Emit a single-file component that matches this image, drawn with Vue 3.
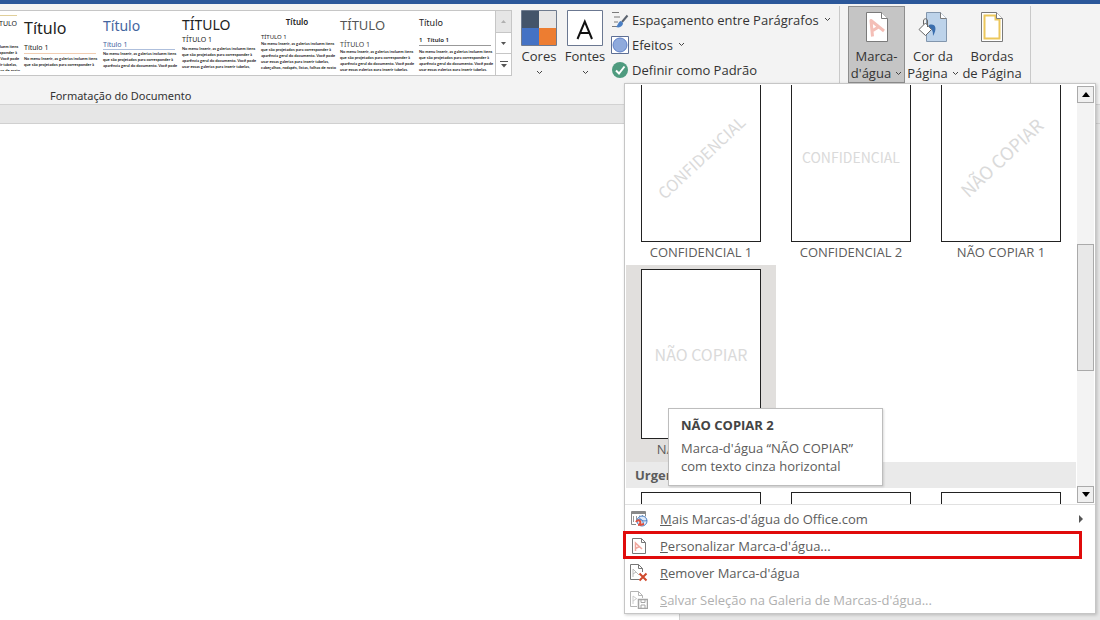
<script setup>
const body = [
  'No menu Inserir, as galerias incluem itens',
  'que são projetados para corresponder à',
  'aparência geral do documento. Você pode',
  'usar essas galerias para inserir tabelas,',
  'cabeçalhos, rodapés, listas, folhas de rosto',
  'e outros blocos de construção do'
]
const styles = [
  { id: 0, title: 'TÍTULO', sub: '', kind: 's-cut', lines: 5 },
  { id: 1, title: 'Título', sub: 'Título 1', kind: 's-office', lines: 2 },
  { id: 2, title: 'Título', sub: 'Título 1', kind: 's-blue', lines: 3 },
  { id: 3, title: 'TÍTULO', sub: 'TÍTULO 1', kind: 's-caps', lines: 4 },
  { id: 4, title: 'Título', sub: 'TÍTULO 1', kind: 's-center', lines: 5 },
  { id: 5, title: 'TÍTULO', sub: 'TÍTULO 1', kind: 's-light', lines: 4 },
  { id: 6, title: 'Título', sub: '1   Título 1', kind: 's-number', lines: 4 }
]
const marks = [
  { name: 'CONFIDENCIAL 1', text: 'CONFIDENCIAL', cls: 'conf diag' },
  { name: 'CONFIDENCIAL 2', text: 'CONFIDENCIAL', cls: 'conf' },
  { name: 'NÃO COPIAR 1', text: 'NÃO COPIAR', cls: 'copy diag' },
  { name: 'NÃO COPIAR 2', text: 'NÃO COPIAR', cls: 'copy', active: true }
]
const actions = [
  { icon: 'office', key: 'M', rest: "ais Marcas-d'água do Office.com", arrow: true },
  { icon: 'custom', key: 'P', rest: "ersonalizar Marca-d'água...", marked: true },
  { icon: 'remove', key: 'R', rest: "emover Marca-d'água" },
  { icon: 'save', key: 'S', rest: "alvar Seleção na Galeria de Marcas-d'água...", disabled: true }
]
</script>

<template>
  <div class="app">
    <div class="titlebar"></div>
    <header class="ribbon">
      <div class="tools">
        <div class="gallery">
          <div class="strip">
            <button v-for="s in styles" :key="s.id" class="style" :class="s.kind">
              <span class="s-title">{{ s.title }}</span>
              <span v-if="s.sub" class="s-sub">{{ s.sub }}</span>
              <span class="s-body"><span v-for="l in body.slice(0, s.lines)" :key="l">{{ l }}</span></span>
            </button>
          </div>
          <div class="spin">
            <button class="off" aria-label="Anterior"><svg width="5" height="3"><path d="M0 3L2.500 0 5 3z" fill="#b0b0b0" /></svg></button>
            <button aria-label="Próximo"><svg width="5" height="3"><path d="M0 0h5L2.500 3z" fill="#555" /></svg></button>
            <button aria-label="Mais estilos"><svg width="8" height="7"><path d="M0 .5h8" stroke="#555" /><path d="M1 3h6L4 6.500z" fill="#555" /></svg></button>
          </div>
        </div>

        <button class="big cores">
          <svg width="36" height="36" viewBox="0 0 36 36">
            <path fill="#44546a" d="M1 1h17v17H1z" /><path fill="#e7e6e6" d="M18 1h17v17H18z" />
            <path fill="#4472c4" d="M1 18h17v17H1z" /><path fill="#ed7d31" d="M18 18h17v17H18z" />
            <path d="M.5 .5h35v35H.5z" fill="none" stroke="#6f7b8f" />
          </svg>
          <span>Cores</span>
          <svg class="chev" width="7" height="5"><path d="M1 1l2.500 2.500L6 1" /></svg>
        </button>
        <button class="big fontes">
          <svg width="36" height="36" viewBox="0 0 36 36">
            <path d="M.5 .5h35v35H.5z" fill="#fff" stroke="#6b7891" />
            <path d="M10.500 29L17.800 11.500 25 29M13.300 23h9" fill="none" stroke="#111" stroke-width="2" />
          </svg>
          <span>Fontes</span>
          <svg class="chev" width="7" height="5"><path d="M1 1l2.500 2.500L6 1" /></svg>
        </button>

        <div class="stack">
          <button>
            <svg width="18" height="18" viewBox="0 0 18 18" fill="none">
              <path d="M1 1.500h7M3 6h6M3 11h4M1 15.500h5" stroke="#7a7a7a" />
              <path d="M16.500 4.500L11 11" stroke="#5c6470" stroke-width="2" />
              <path d="M10 10c-3 .5-3 4.500-5 6 4 1.500 7-1 7-4z" fill="#4a7fc4" />
            </svg>
            <span>Espaçamento entre Parágrafos</span>
            <svg class="chev" width="7" height="5"><path d="M1 1l2.500 2.500L6 1" /></svg>
          </button>
          <button>
            <svg width="18" height="18" viewBox="0 0 18 18"><path d="M.5 .5h17v17H.5z" fill="#fff" stroke="#5d6f95" /><circle cx="9" cy="9" r="7" fill="#8faadc" stroke="#5f80c8" /></svg>
            <span>Efeitos</span>
            <svg class="chev" width="7" height="5"><path d="M1 1l2.500 2.500L6 1" /></svg>
          </button>
          <button>
            <svg width="18" height="18" viewBox="0 0 18 18"><circle cx="9" cy="9" r="8" fill="#4f9b7f" /><path d="M5 9.500l3 3 5.500-7" fill="none" stroke="#fff" stroke-width="2" /></svg>
            <span>Definir como Padrão</span>
          </button>
        </div>

        <div class="page-group">
          <div class="anchor">
            <button class="big page pressed" aria-expanded="true">
              <svg width="30" height="32" viewBox="0 0 30 32">
                <path d="M4.500 1.500h15l6 6v23h-21z" fill="#fff" stroke="#7a7a7a" /><path d="M19.500 1.500v6h6" fill="#fff" stroke="#7a7a7a" />
                <path d="M10.500 25.500L9 9.500 22 20M10 20l6.500-4" fill="none" stroke="#f4bfb7" stroke-width="3" stroke-linejoin="round" />
              </svg>
              <span>Marca-</span>
              <span>d'água <svg class="chev" width="7" height="5"><path d="M1 1l2.500 2.500L6 1" /></svg></span>
            </button>

            <section class="menu">
              <div class="scroller">
                <div class="view">
                  <div class="cells">
                    <button v-for="m in marks" :key="m.name" class="cell" :class="{ active: m.active }">
                      <span class="sheet"><span class="wm" :class="m.cls">{{ m.text }}</span></span>
                      <span class="caption">{{ m.name }}</span>
                    </button>
                  </div>
                  <h2>Urgente</h2>
                  <div class="cells">
                    <button v-for="n in 3" :key="n" class="cell" :aria-label="'Urgente ' + n"><span class="sheet"></span></button>
                  </div>
                </div>
                <div class="bar">
                  <button aria-label="Rolar para cima"><svg width="8" height="5"><path d="M0 5L4 0l4 5z" /></svg></button>
                  <div class="track"><div class="thumb"></div></div>
                  <button aria-label="Rolar para baixo"><svg width="8" height="5"><path d="M0 0h8L4 5z" /></svg></button>
                </div>
                <div class="tip" role="tooltip">
                  <strong>NÃO COPIAR 2</strong>
                  <p>Marca-d'água “NÃO COPIAR”<br />com texto cinza horizontal</p>
                </div>
              </div>
              <div class="actions">
                <button v-for="a in actions" :key="a.icon" :class="{ marked: a.marked }" :disabled="a.disabled">
                  <svg v-if="a.icon === 'office'" width="18" height="18" viewBox="0 0 18 18" fill="none">
                    <path d="M6 14.500H1.500v-13h14v5" stroke="#888" /><path d="M1 3h15" stroke="#888" stroke-width="2" /><path d="M3.500 6v6M6.500 6v5M9.500 5.500v2M12.500 5v1.500" stroke="#999" />
                    <circle cx="12" cy="11" r="5" stroke="#4a82c8" fill="#dfeafa" /><path d="M7.500 10c3-2 6 0 6 5M9 7.500c2 3 5 4 8 3" stroke="#4a82c8" /><path d="M6 12c1-2 3-2 4-1s0 4-2 4M10 15l4-1" stroke="#e0503c" stroke-width="2" />
                  </svg>
                  <svg v-else-if="a.icon === 'custom'" width="18" height="18" viewBox="0 0 18 18" fill="none">
                    <path d="M2.500 1.500h9l4 4v11h-13z" fill="#fff" stroke="#777" /><path d="M11.500 1.500v4h4" stroke="#777" /><path d="M5.500 14V6l6.500 6M5.500 11.500l4-2" stroke="#f0a79d" stroke-width="1.500" />
                  </svg>
                  <svg v-else-if="a.icon === 'remove'" width="18" height="18" viewBox="0 0 18 18" fill="none">
                    <path d="M9 15.500H.5V.5h8l4 4V8M8.500 .5v4h4" stroke="#777" /><path d="M3 13V5l6 6M3 10l3-2" stroke="#bbb" /><path d="M9.500 9.500l7 7M16.500 9.500l-7 7" stroke="#d0492c" stroke-width="2" />
                  </svg>
                  <svg v-else width="18" height="18" viewBox="0 0 18 18" fill="none">
                    <path d="M7 15.500H.5V.5h8l4 4V7M8.500 .5v4h4" stroke="#b5b5b5" /><path d="M3 13V5l4 3M3 10l3-2" stroke="#ccc" />
                    <path d="M8.500 8.500h9v9h-9z" stroke="#a5a5a5" stroke-width="1.500" /><path d="M11 8.500v3h4v-3M11 17v-3h4v3" stroke="#a5a5a5" />
                  </svg>
                  <span class="label"><u>{{ a.key }}</u>{{ a.rest }}</span>
                  <svg v-if="a.arrow" width="4" height="8"><path d="M0 0l4 4-4 4z" fill="#555" /></svg>
                </button>
              </div>
            </section>
          </div>
          <button class="big page">
            <svg width="30" height="32" viewBox="0 0 30 32">
              <path d="M8.500 1.500h14l6 6v23h-20z" fill="#bdd3ea" stroke="#8296ad" /><path d="M22.500 1.500v6h6" fill="#fff" stroke="#7a7a7a" />
              <path d="M11 14c6-2 9 3 4 11 0-4 0-6-4-9z" fill="#3a6eae" />
              <path d="M1 18.500l6.500-6.500 6 6.500-6 6z" fill="#fff" stroke="#666" /><path d="M5.500 13.500V10c0-3 4-3 4 0v6" fill="none" stroke="#666" />
            </svg>
            <span>Cor da</span>
            <span>Página <svg class="chev" width="7" height="5"><path d="M1 1l2.500 2.500L6 1" /></svg></span>
          </button>
          <button class="big page">
            <svg width="30" height="32" viewBox="0 0 30 32">
              <path d="M4.500 1.500h15l6 6v23h-21z" fill="#fff" stroke="#7a7a7a" /><path d="M7.500 4.500h11v4h4v19h-15z" fill="none" stroke="#ecc75c" stroke-width="2" /><path d="M19.500 1.500v6h6" fill="#fff" stroke="#7a7a7a" />
            </svg>
            <span>Bordas</span>
            <span>de Página</span>
          </button>
        </div>
      </div>
      <div class="group-label">Formatação do Documento</div>
    </header>
    <div class="gap"></div>
    <main class="desk"><div class="paper"></div></main>
  </div>
</template>

<style>
html, body, #app { height: 100%; }
body { margin: 0; overflow: hidden; }
</style>

<style scoped>
* { box-sizing: border-box; }
.app { height: 100%; display: flex; flex-direction: column; font: 13px/18px "Open Sans", "Noto Sans", sans-serif; color: #333; background: #e6e6e6; }
button { font: inherit; color: inherit; background: none; border: 0; padding: 0; margin: 0; }
svg { display: block; flex: none; }
.titlebar { height: 4px; background: #2b579a; flex: none; }
.ribbon { background: #f3f3f3; border-bottom: 1px solid #d2d2d2; flex: none; }
.tools { display: flex; align-items: flex-start; height: 79px; }
.gallery { display: flex; width: 512px; height: 66px; margin-top: 6px; background: #fff; border: 1px solid #c6c6c6; border-left: 0; flex: none; }
.strip { flex: 1; display: flex; overflow: hidden; justify-content: flex-end; }
.style { flex: none; width: 79px; height: 60px; padding: 4px 4px 0 3px; text-align: left; display: flex; flex-direction: column; overflow: hidden; color: #222; white-space: nowrap; }
.s-title { font: 14px/20px "Noto Sans", sans-serif; }
.s-sub { font: 7px/9px "Noto Sans", sans-serif; }
.s-body { display: flex; flex-direction: column; font: 700 4px/6px Lato, sans-serif; color: #222; }
.s-cut .s-title { font-size: 7px; line-height: 16px; border-top: 1px solid #e0cf9a; text-align: right; margin-bottom: 12px; }
.s-cut .s-body { text-align: right; }
.s-office .s-title { font-size: 16px; line-height: 26px; }
.s-office .s-sub { line-height: 10px; margin-bottom: 2px; border-bottom: 1px solid #f1cdb2; padding-top: 2px; }
.s-blue .s-title { color: #44659f; line-height: 22px; }
.s-blue .s-sub { color: #44659f; line-height: 9px; border-bottom: 1px solid #aebfdc; padding-top: 3px; margin-bottom: 1px; }
.s-caps .s-sub { line-height: 10px; margin-bottom: 1px; }
.s-center .s-title { font-size: 8px; font-weight: 600; line-height: 14px; text-align: center; }
.s-center .s-sub { font-size: 6px; line-height: 8px; padding-top: 4px; }
.s-light .s-title { color: #555; font-size: 13px; }
.s-light .s-sub { color: #444; padding-top: 5px; }
.s-number .s-title { font-size: 9px; line-height: 16px; }
.s-number .s-sub { font-size: 6px; line-height: 9px; white-space: pre; font-weight: 600; padding-top: 5px; margin-bottom: 3px; border-bottom: 1px solid #999; }
.spin { width: 16px; display: flex; flex-direction: column; border-left: 1px solid #c6c6c6; }
.spin button { flex: 1; display: flex; align-items: center; justify-content: center; }
.spin button + button { border-top: 1px solid #c6c6c6; }
.spin .off { background: #e6e6e6; }
.chev path { fill: none; stroke: #444; }
.big { display: flex; flex-direction: column; align-items: center; flex: none; width: 46px; padding-top: 6px; white-space: nowrap; }
.big > span { line-height: 18px; margin-top: 1px; }
.big > .chev { margin-top: 5px; }
.cores { margin-left: 4px; }
.stack { display: flex; flex-direction: column; width: 228px; margin-left: 3px; padding-top: 3px; flex: none; }
.stack button { display: flex; align-items: center; height: 25px; gap: 3px; white-space: nowrap; }
.stack .chev { margin-left: 2px; }
.page-group { display: flex; height: 77px; flex: none; width: 192px; margin-top: 2px; border: solid #c9c9c9; border-width: 0 1px; padding-left: 8px; }
.anchor { position: relative; }
.page { width: 56px; height: 77px; padding-top: 5px; }
.page > span { display: flex; align-items: center; gap: 4px; margin: 0; line-height: 17px; }
.page > svg { margin-bottom: 5px; }
.page:last-child { width: 62px; }
.pressed { width: 57px; background: #c5c5c5; border: 1px solid #8e8e8e; padding-top: 4px; }
.group-label { padding: 2px 0 0 50px; font-family: "Noto Sans", sans-serif; font-size: 11px; line-height: 21px; height: 21px; }
.gap { height: 19px; border-bottom: 1px solid #d0d0d0; flex: none; }
.desk { flex: 1; display: flex; }
.paper { width: 680px; background: #fff; border-right: 1px solid #d0d0d0; }

.menu { position: absolute; top: 100%; left: -224px; width: 472px; background: #fff; border: 1px solid #c6c6c6; box-shadow: 1px 1px 3px #0003; z-index: 2; color: #5c5c5c; }
.scroller { position: relative; height: 421px; display: flex; border-bottom: 1px solid #e1e1e1; padding: 1px 1px 0; }
.view { flex: 1; overflow: hidden; }
.cells { display: grid; grid-template-columns: repeat(3, 1fr); }
.cells:first-child { margin-top: -17px; }
.cell { height: 197px; display: flex; flex-direction: column; align-items: center; padding-top: 4px; }
.active { background: #e1dfdd; }
.sheet { width: 120px; height: 170px; border: 1px solid #222; background: #fff; display: flex; align-items: center; justify-content: center; flex: none; }
.wm { font-family: "Noto Sans CJK SC", "Open Sans", sans-serif; color: #dadada; white-space: nowrap; }
.conf { font-size: 14px; }
.copy { font-size: 16px; }
.conf.diag { font-size: 16px; transform: rotate(-43deg); }
.copy.diag { font-size: 18px; transform: rotate(-43deg); }
.caption { line-height: 20px; }
h2 { margin: 0; font-size: 13px; line-height: 26px; background: #eaeaea; padding-left: 9px; }
.bar { width: 18px; padding: 1px 0 1px 1px; display: flex; flex-direction: column; }
.bar button { height: 17px; border: 1px solid #aaa; background: #f0f0f0; display: flex; align-items: center; justify-content: center; }
.track { flex: 1; background: #f3f3f3; padding-top: 141px; }
.thumb { height: 127px; background: #e8e8e8; border: 1px solid #aaa; }
.tip { position: absolute; left: 43px; top: 324px; width: 215px; height: 78px; padding: 7px 12px; background: #fff; border: 1px solid #bdbdbd; box-shadow: 1px 1px 2px #0002; white-space: nowrap; }
.tip strong { display: block; color: #444; }
.tip p { margin: 5px 0 0; }
.actions { display: flex; flex-direction: column; }
.actions button { position: relative; height: 27px; display: flex; align-items: center; padding: 0 12px 0 5px; }
.label { flex: 1; text-align: left; margin-left: 12px; }
.actions button:disabled { color: #b0b0b0; }
.marked::after { content: ""; position: absolute; left: -2px; right: 13px; top: -1px; bottom: 0; border: 3px solid #e00b0b; }
</style>
